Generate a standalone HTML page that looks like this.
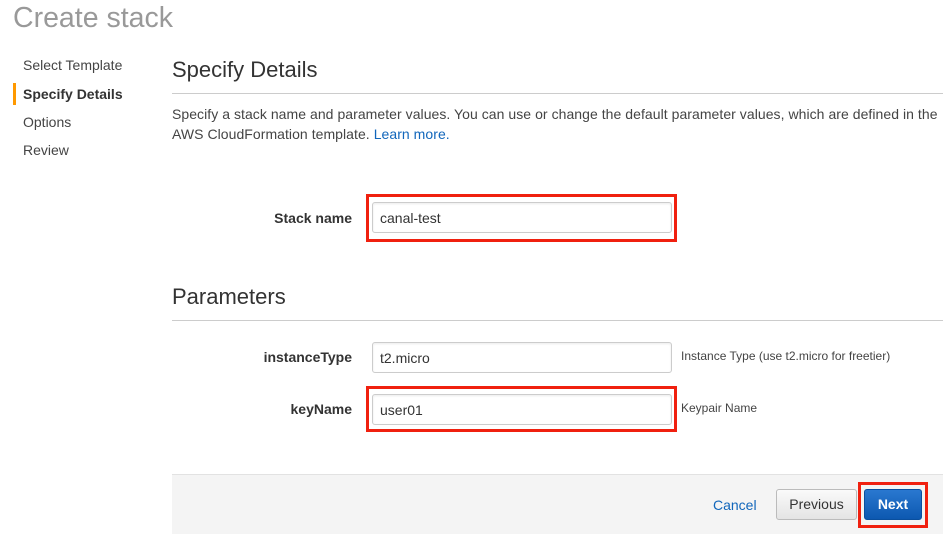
<!DOCTYPE html>
<html><head><style>
body{margin:0;width:950px;height:540px;background:#fff;font-family:"Liberation Sans",Arial,sans-serif;position:relative;overflow:hidden;color:#444}
.a{position:absolute;white-space:nowrap}
.inp{position:absolute;border:1px solid #ccc;border-radius:3px;background:#fff;box-sizing:border-box;font-size:14px;color:#333;padding-left:7px;display:flex;align-items:center;box-shadow:inset 0 1px 2px rgba(0,0,0,.08)}
.red{position:absolute;border:3px solid #f0200f;box-sizing:border-box}
.lbl{position:absolute;right:598px;font-weight:bold;font-size:14px;color:#333}
</style></head><body>
<div class="a" style="left:13px;top:2px;font-size:28.5px;color:#999">Create stack</div>
<div class="a" style="left:23px;top:57px;font-size:14px">Select Template</div>
<div style="position:absolute;left:13px;top:83px;width:3px;height:22px;background:#f90"></div>
<div class="a" style="left:23px;top:86px;font-size:14px;font-weight:bold;color:#333">Specify Details</div>
<div class="a" style="left:23px;top:114px;font-size:14px">Options</div>
<div class="a" style="left:23px;top:142px;font-size:14px">Review</div>
<div class="a" style="left:172px;top:57px;font-size:22px;color:#333">Specify Details</div>
<div style="position:absolute;left:172px;top:93px;width:771px;height:1px;background:#ccc"></div>
<div class="a" style="left:172px;top:104px;font-size:14px;line-height:20px;letter-spacing:0.05px">Specify a stack name and parameter values. You can use or change the default parameter values, which are defined in the<br>AWS CloudFormation template. <span style="color:#1166bb">Learn more.</span></div>
<div class="lbl" style="top:210px">Stack name</div>
<div class="red" style="left:366px;top:194px;width:311px;height:48px"></div>
<div class="inp" style="left:372px;top:202px;width:300px;height:31px">canal-test</div>
<div class="a" style="left:172px;top:284px;font-size:22px;color:#333">Parameters</div>
<div style="position:absolute;left:172px;top:320px;width:771px;height:1px;background:#ccc"></div>
<div class="lbl" style="top:349px">instanceType</div>
<div class="inp" style="left:372px;top:342px;width:300px;height:31px">t2.micro</div>
<div class="a" style="left:681px;top:349px;font-size:12px">Instance Type (use t2.micro for freetier)</div>
<div class="lbl" style="top:401px">keyName</div>
<div class="red" style="left:366px;top:386px;width:311px;height:46px"></div>
<div class="inp" style="left:372px;top:394px;width:300px;height:31px">user01</div>
<div class="a" style="left:681px;top:401px;font-size:12px">Keypair Name</div>
<div style="position:absolute;left:172px;top:474px;width:771px;height:59px;background:#f4f4f4;border-top:1px solid #e2e2e2"></div>
<div class="a" style="left:713px;top:497px;font-size:14px;color:#1166bb">Cancel</div>
<div style="position:absolute;left:776px;top:489px;width:81px;height:31px;box-sizing:border-box;border:1px solid #bbb;border-radius:3px;background:linear-gradient(#fafafa,#e4e4e4);font-size:14px;color:#333;text-align:center;line-height:29px">Previous</div>
<div class="red" style="left:858px;top:482px;width:70px;height:46px"></div>
<div style="position:absolute;left:864px;top:489px;width:58px;height:31px;box-sizing:border-box;border:1px solid #0a4f9e;border-radius:3px;background:linear-gradient(#2a78d0,#0d58b0);font-size:14px;font-weight:bold;color:#fff;text-align:center;line-height:29px">Next</div>
</body></html>
